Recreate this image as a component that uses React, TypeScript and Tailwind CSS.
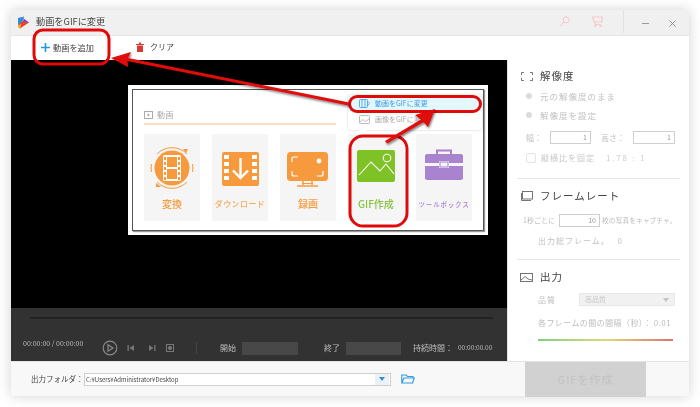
import React from "react";

const Logo = () => (
  <svg width="13" height="13" viewBox="0 0 13 13">
    <path d="M1 2 L7 0.5 L5 7 L1 9Z" fill="#2d8fe0" />
    <path d="M1 9 L7 4 L12 6.5 L3 12.5Z" fill="#e8442c" />
    <path d="M1 9 L4 8 L3.5 12.5 L1.5 12Z" fill="#f5a623" />
    <path d="M6 2 L12 6.5 L7 6Z" fill="#7a4bc9" />
  </svg>
);

const FilmIcon = () => (
  <svg width="44" height="46" viewBox="0 0 44 46">
    <circle cx="22" cy="23" r="17.5" fill="#f79a3e" />
    <path d="M7 9 A21 21 0 0 1 37 9" fill="none" stroke="#f79a3e" strokeWidth="1" />
    <path d="M37 37 A21 21 0 0 1 7 37" fill="none" stroke="#f79a3e" strokeWidth="1" />
    <path d="M1.5 27 A21 21 0 0 1 1.5 19 M42.5 19 A21 21 0 0 1 42.5 27" fill="none" stroke="#f79a3e" strokeWidth="1" />
    <path d="M33 4 L38 4 L36 8Z M6 38 L11 42 L6 42Z" fill="#f79a3e" />
    <rect x="13" y="10" width="18" height="26" rx="1.5" fill="#fff" />
    <rect x="17" y="12" width="10" height="10" fill="#f79a3e" />
    <rect x="17" y="24" width="10" height="10" fill="#f79a3e" />
    <g fill="#f79a3e">
      <rect x="14" y="12" width="2" height="3" />
      <rect x="14" y="17" width="2" height="3" />
      <rect x="14" y="22" width="2" height="3" />
      <rect x="14" y="27" width="2" height="3" />
      <rect x="14" y="32" width="2" height="3" />
      <rect x="28" y="12" width="2" height="3" />
      <rect x="28" y="17" width="2" height="3" />
      <rect x="28" y="22" width="2" height="3" />
      <rect x="28" y="27" width="2" height="3" />
      <rect x="28" y="32" width="2" height="3" />
    </g>
  </svg>
);

const DownloadIcon = () => (
  <svg width="37" height="34" viewBox="0 0 37 34">
    <rect x="0" y="0" width="37" height="34" rx="2" fill="#f79a3e" />
    <g fill="#fff">
      <rect x="2" y="3" width="5" height="4" />
      <rect x="2" y="10" width="5" height="4" />
      <rect x="2" y="17" width="5" height="4" />
      <rect x="2" y="24" width="5" height="4" />
      <rect x="30" y="3" width="5" height="4" />
      <rect x="30" y="10" width="5" height="4" />
      <rect x="30" y="17" width="5" height="4" />
      <rect x="30" y="24" width="5" height="4" />
    </g>
    <path d="M18.5 6 V26 M11 18.5 L18.5 26 L26 18.5" fill="none" stroke="#fff" strokeWidth="2.4" />
  </svg>
);

const ScreenIcon = () => (
  <svg width="42" height="35" viewBox="0 0 42 35">
    <rect x="0" y="0" width="41" height="29" rx="3.5" fill="#f79a3e" />
    <path d="M5 10 V7 Q5 5 7 5 H11 M5 19 V22 Q5 24 7 24 H11 M36 19 V22 Q36 24 34 24 H30" fill="none" stroke="#fff" strokeWidth="1.2" />
    <circle cx="32" cy="9" r="2.4" fill="#fff" />
    <path d="M16 29 V33 M25 29 V33 M10 34 H31" stroke="#f79a3e" strokeWidth="1.4" fill="none" />
    <path d="M15 31.5 H26" stroke="#f79a3e" strokeWidth="1" />
  </svg>
);

const PictureIcon = () => (
  <svg width="38" height="32" viewBox="0 0 38 32">
    <rect width="38" height="32" rx="2" fill="#7ec226" />
    <path d="M2 25 L14 12 L23 21 L29 14 L37 24" fill="none" stroke="#fff" strokeWidth="1.1" />
    <circle cx="30" cy="8" r="3.8" fill="#7ec226" stroke="#fff" strokeWidth="1.1" />
  </svg>
);

const BoxIcon = () => (
  <svg width="38" height="32" viewBox="0 0 38 32">
    <path d="M2 5 H36 Q38 5 38 7 V14 H24 V12 H14 V14 H0 V7 Q0 5 2 5Z" fill="#a982d0" />
    <path d="M0 17 H14 V19 H24 V17 H38 V29 Q38 31 36 31 H2 Q0 31 0 29Z" fill="#a982d0" />
    <path d="M12 5 V1.5 H26 V5" fill="none" stroke="#a982d0" strokeWidth="2" />
    <rect x="15" y="13" width="8" height="5" fill="none" stroke="#a982d0" strokeWidth="1" />
  </svg>
);

const Tile = ({ icon, label, cls, top }: { icon: React.ReactNode; label: string; cls: string; top: string }) => (
  <div className="w-[56px] h-[87px] bg-[#f5f5f5] flex flex-col items-center">
    <div className={`${top} h-[56px] flex items-start justify-center`}>{icon}</div>
    <div className={`mt-auto mb-[10px] leading-[14px] whitespace-nowrap font-medium ${cls}`}>{label}</div>
  </div>
);

const PanelTitle = ({ icon, label }: { icon: React.ReactNode; label: string }) => (
  <div className="flex items-center gap-[7px] pl-[12px] h-[14px] text-[10.5px] tracking-[1px] text-[#444]">
    <span className="w-[13px] flex justify-center">{icon}</span>
    <span>{label}</span>
  </div>
);

const Divider = () => <div className="ml-[9px] w-[163px] h-px bg-[#e6e6e6]" />;

const Radio = ({ label }: { label: string }) => (
  <div className="flex items-center h-[14px] pl-[18px] gap-[8px] text-[8.5px] tracking-[1px] text-[#c2c2c2]">
    <span className="w-[6px] h-[6px] rounded-full bg-[#dcdcdc]" />
    <span>{label}</span>
  </div>
);

const NumBox = ({ w, v }: { w: string; v: string }) => (
  <div className={`${w} h-[13px] border border-[#cfcfcf] bg-white text-[7px] text-[#999] text-right pr-[3px] leading-[11px]`}>{v}</div>
);

export default function App() {
  return (
    <div className="relative w-[700px] h-[407px] overflow-hidden bg-white pt-[10px] pl-[11px] font-['Noto_Sans_CJK_JP',sans-serif] blur-[0.35px]">
      <div className="w-[678px] h-[386px] flex flex-col shadow-[0_0_12px_rgba(0,0,0,0.18)]">
        {/* title bar */}
        <div className="h-[26px] bg-[#f0f0f0] flex items-center pl-[6px] border-b border-[#e6e6e6]">
          <Logo />
          <span className="ml-[6px] mb-[2px] text-[9.2px] text-[#444]">動画をGIFに変更</span>
          <div className="ml-auto flex items-center h-full">
            <svg width="11" height="11" viewBox="0 0 11 11" className="mr-[22px] mb-[2px]" fill="none" stroke="#f5caca" strokeWidth="1">
              <circle cx="7.2" cy="3.8" r="3" />
              <path d="M5 6 L1 10 M2.5 8.5 L4 10" />
            </svg>
            <svg width="11" height="11" viewBox="0 0 11 11" className="mr-[20px] mb-[2px]" fill="none" stroke="#f5caca" strokeWidth="1.2">
              <path d="M0.5 1 H10.5 L9.5 6 H2 Z M3 6 V8.5 H9" />
              <circle cx="3.5" cy="10" r="0.6" />
              <circle cx="8.5" cy="10" r="0.6" />
            </svg>
            <div className="w-px h-[23px] self-start bg-[#e2e2e2] mr-[18px]" />
            <div className="w-[7px] h-px bg-[#999] mr-[20px] mt-[2px]" />
            <svg width="7" height="7" viewBox="0 0 7 7" className="mr-[13px] mt-[2px]" stroke="#888" strokeWidth="0.9">
              <path d="M0.5 0.5 L6.5 6.5 M6.5 0.5 L0.5 6.5" />
            </svg>
          </div>
        </div>
        {/* toolbar */}
        <div className="h-[24px] bg-white flex items-center pl-[30px] pb-[2px] text-[8.2px] text-[#444]">
          <svg width="9" height="9" viewBox="0 0 9 9" stroke="#1f9bdf" strokeWidth="1.6">
            <path d="M4.5 0 V9 M0 4.5 H9" />
          </svg>
          <span className="ml-[3px] w-[41px] whitespace-nowrap">動画を追加</span>
          <svg width="8" height="10" viewBox="0 0 8 10" fill="#d63a30" className="ml-[42px]">
            <path d="M0 2 H8 V3 H0Z M3 0.5 H5 V2 H3Z M1 3.5 H7 V10 H1Z" />
          </svg>
          <span className="ml-[6px] text-[8px]">クリア</span>
        </div>
        {/* main */}
        <div className="flex h-[301px] min-h-0">
          <div className="w-[496px] flex flex-col">
            <div className="h-[248px] bg-black" />
            <div className="h-[53px] bg-[#323232] flex flex-col pl-[12px] pr-[14px] text-[#bdbdbd]">
              <div className="mt-[9px] ml-[7px] h-[2px] bg-[#222]" />
              <div className="mt-[22px] flex items-center h-[14px]">
                <span className="w-[79px] self-start leading-[5px] text-[7px] whitespace-nowrap">00:00:00 / 00:00:00</span>
                <svg width="16" height="16" viewBox="0 0 16 16" fill="none" stroke="#8a8a8a" strokeWidth="1.2" className="mr-[9px]">
                  <circle cx="8" cy="8" r="6.8" />
                  <path d="M6 4.8 L11 8 L6 11.2Z" />
                </svg>
                <svg width="8" height="8" viewBox="0 0 8 8" fill="#777" className="mr-[13px]">
                  <path d="M0.5 1 H1.8 V7 H0.5Z M7 1 V7 L2.5 4Z" />
                </svg>
                <svg width="8" height="8" viewBox="0 0 8 8" fill="#777" className="mr-[10px]">
                  <path d="M1 1 V7 L5.5 4Z M6.2 1 H7.5 V7 H6.2Z" />
                </svg>
                <svg width="8" height="8" viewBox="0 0 8 8" fill="none" stroke="#777" className="mr-[22px]">
                  <rect x="0.5" y="0.5" width="7" height="7" />
                  <circle cx="4" cy="4" r="1.6" fill="#777" />
                </svg>
                <div className="w-px h-[12px] bg-[#444] mr-[23px]" />
                <span className="w-[22px] text-[8px] whitespace-nowrap">開始</span>
                <div className="w-[56px] h-[13px] bg-[#484848]" />
                <span className="ml-[26px] w-[22px] text-[8px] whitespace-nowrap">終了</span>
                <div className="w-[55px] h-[13px] bg-[#484848]" />
                <span className="ml-[12px] w-[45px] text-[8px] whitespace-nowrap">持続時間：</span>
                <span className="text-[6.5px] whitespace-nowrap">00:00:00.00</span>
              </div>
            </div>
          </div>
          {/* right panel */}
          <div className="w-[182px] bg-white border-l border-[#e2e2e2] flex flex-col">
            <div className="mt-[9px]">
              <PanelTitle
                label="解像度"
                icon={
                  <svg width="12" height="9" viewBox="0 0 12 9" fill="none" stroke="#666" strokeWidth="0.9">
                    <path d="M3 0.5 H0.5 V3 M9 0.5 H11.5 V3 M0.5 6 V8.5 H3 M11.5 6 V8.5 H9" />
                  </svg>
                }
              />
            </div>
            <div className="mt-[6px]"><Radio label="元の解像度のまま" /></div>
            <div className="mt-[5px]"><Radio label="解像度を設定" /></div>
            <div className="mt-[9px] flex items-center pl-[18px] h-[13px] text-[8px] text-[#c2c2c2]">
              <span className="w-[24px]">幅：</span>
              <NumBox w="w-[41px]" v="1" />
              <span className="ml-[10px] w-[32px] whitespace-nowrap">高さ：</span>
              <NumBox w="w-[42px]" v="1" />
            </div>
            <div className="mt-[8px] flex items-center pl-[18px] h-[12px] text-[8px] tracking-[1px] text-[#c8c8c8]">
              <span className="w-[10px] h-[10px] border border-[#e4e4e4] rounded-[2px]" />
              <span className="ml-[5px]">縦横比を固定</span>
              <span className="ml-[11px] tracking-[1.8px] text-[#cfcfcf]">1.78 : 1</span>
            </div>
            <div className="mt-[14px]"><Divider /></div>
            <div className="mt-[10px]">
              <PanelTitle
                label="フレームレート"
                icon={
                  <svg width="12" height="10" viewBox="0 0 12 10" fill="none" stroke="#666" strokeWidth="0.9">
                    <rect x="1.5" y="0.5" width="10" height="7.5" />
                    <path d="M0.5 2 V9.5 H10" />
                  </svg>
                }
              />
            </div>
            <div className="mt-[11px] flex items-center pl-[15px] h-[12px] text-[7px] text-[#bdbdbd] whitespace-nowrap">
              <span className="w-[36px]">1秒ごとに</span>
              <NumBox w="w-[41px]" v="10" />
              <span className="ml-[2px] text-[6.8px]">枚の写真をキャプチャ。</span>
            </div>
            <div className="mt-[9px] h-[12px] pl-[30px] text-[8px] tracking-[1px] text-[#c2c2c2] whitespace-nowrap">
              出力総フレーム。 <span className="ml-[5px]">0</span>
            </div>
            <div className="mt-[12px]"><Divider /></div>
            <div className="mt-[10px]">
              <PanelTitle
                label="出力"
                icon={
                  <svg width="13" height="9" viewBox="0 0 13 9" fill="none" stroke="#666" strokeWidth="0.9">
                    <rect x="0.5" y="0.5" width="12" height="8" />
                    <path d="M1 7 L5 3.5 L8 6 L12 7" />
                  </svg>
                }
              />
            </div>
            <div className="mt-[9px] flex items-center pl-[30px] h-[13px] text-[8px] tracking-[1px] text-[#bdbdbd]">
              <span className="w-[41px]">品質</span>
              <div className="w-[96px] h-[13px] bg-[#f1f1f1] border border-[#e8e8e8] flex items-center px-[5px] text-[7px] tracking-normal text-[#c8c8c8]">
                高品質
                <span className="ml-auto w-0 h-0 border-x-[3px] border-x-transparent border-t-[4px] border-t-[#c4c4c4]" />
              </div>
            </div>
            <div className="mt-[11px] h-[12px] pl-[30px] text-[8px] tracking-[0.42px] text-[#bdbdbd] whitespace-nowrap">
              各フレームの間の間隔（秒）： 0.01
            </div>
            <div className="mt-[10px] ml-[30px] w-[135px] h-[2px] bg-gradient-to-r from-[#7fcf7f] via-[#dcd87a] to-[#d9736b]" />
          </div>
        </div>
        {/* bottom */}
        <div className="h-[35px] bg-[#f8f8f8] border-t border-[#e4e4e4] flex items-center pl-[20px] text-[7.5px] text-[#444]">
          <span className="w-[53px] whitespace-nowrap">出力フォルダ：</span>
          <div className="w-[307px] h-[13px] bg-white border border-[#cfcfcf] flex items-center text-[6px] text-[#444] pl-px">
            C:¥Users¥Administrator¥Desktop
            <span className="ml-auto mr-[1px] h-[11px] w-[14px] bg-[#eef1f4] flex items-center justify-center">
              <span className="w-0 h-0 border-x-[3px] border-x-transparent border-t-[4px] border-t-[#2f8fd8]" />
            </span>
          </div>
          <svg width="14" height="10" viewBox="0 0 14 10" fill="none" stroke="#2f9be0" strokeWidth="1.1" className="ml-[10px]">
            <path d="M0.8 9 V1 H5 L6.5 2.5 H12 V4 M0.8 9 L3 4 H13.3 L11.5 9Z" />
          </svg>
          <div className="ml-[110px] w-[121px] h-[35px] bg-[#d1d1d1] flex items-center justify-center text-[11px] tracking-[1px] text-[#c2c2c2]">
            GIFを作成
          </div>
        </div>
      </div>

      {/* inset screenshot */}
      <div className="absolute left-[128px] top-[85px] w-[360px] h-[150px] bg-white p-[4px]">
        <div className="h-full border border-[#555] flex flex-col pl-[11px] shadow-[1px_1px_1px_rgba(0,0,0,0.4)]">
          <div className="mt-[19px] flex items-center gap-[4px] h-[12px] text-[8px] text-[#aaa]">
            <svg width="9" height="8" viewBox="0 0 9 8">
              <rect x="0.5" y="0.5" width="8" height="7" fill="none" stroke="#aaa" />
              <path d="M3.5 2.2 L6 4 L3.5 5.8Z" fill="#aaa" />
            </svg>
            <span className="tracking-[0.5px]">動画</span>
          </div>
          <div className="mt-[2px] w-[192px] h-[2px] bg-[#f9dcc4]" />
          <div className="mt-[9px] flex gap-[12px]">
            <Tile icon={<FilmIcon />} label="変換" cls="text-[10px] text-[#f79a3e]" top="pt-[11px]" />
            <Tile icon={<DownloadIcon />} label="ダウンロード" cls="text-[8px] text-[#f7a85a] tracking-[0.4px]" top="pt-[18px]" />
            <Tile icon={<ScreenIcon />} label="録画" cls="text-[10px] text-[#f79a3e]" top="pt-[18px]" />
            <Tile icon={<PictureIcon />} label="GIF作成" cls="text-[10px] text-[#86c440]" top="pt-[16px]" />
            <Tile icon={<BoxIcon />} label="ツールボックス" cls="text-[6.5px] text-[#a982d0] tracking-[0.8px]" top="pt-[15px]" />
          </div>
        </div>
      </div>

      {/* popup menu */}
      <div className="absolute left-[348px] top-[95px] w-[134px] h-[35px] bg-white rounded-[2px] shadow-[0_0_2px_rgba(0,0,0,0.25)] text-[7px] pt-[1px]">
        <div className="h-[15px] bg-[#e3f7ff] flex items-center pl-[11px] gap-[5px] text-[#3e9be0]">
          <svg width="11" height="9" viewBox="0 0 11 9" fill="none" stroke="#3e9be0" strokeWidth="0.8">
            <rect x="0.5" y="0.5" width="8" height="8" rx="1" />
            <path d="M3 0.5 V8.5 M6 0.5 V8.5 M9 2.5 L10.5 4.5 L9 6.5" />
          </svg>
          <span className="whitespace-nowrap">動画をGIFに変更</span>
        </div>
        <div className="h-[17px] flex items-center pl-[11px] gap-[5px] text-[#a8a8a8]">
          <svg width="11" height="9" viewBox="0 0 11 9" fill="none" stroke="#aaa" strokeWidth="0.8">
            <rect x="0.5" y="0.5" width="10" height="8" rx="1" />
            <path d="M1 7 L4 4.5 L6.5 6.5 L10 4" />
          </svg>
          <span className="whitespace-nowrap">画像をGIFに変更</span>
        </div>
        <div className="absolute left-[11px] top-[35px] w-0 h-0 border-x-[4px] border-x-transparent border-t-[4px] border-t-white" />
      </div>

      {/* red annotations */}
      <svg className="absolute left-0 top-0 pointer-events-none" width="700" height="407" viewBox="0 0 700 407">
        <defs>
          <filter id="sh" x="-10%" y="-30%" width="120%" height="160%">
            <feDropShadow dx="1" dy="1.5" stdDeviation="1.2" floodColor="#000" floodOpacity="0.55" />
          </filter>
        </defs>
        <rect x="34" y="30" width="75" height="34" rx="9" fill="none" stroke="#e00a0a" strokeWidth="3" />
        <rect x="349.5" y="96.5" width="131" height="15" rx="7.5" fill="none" stroke="#e00a0a" strokeWidth="3" />
        <rect x="350" y="136" width="57" height="90" rx="13" fill="none" stroke="#e00a0a" strokeWidth="3" />
        <g filter="url(#sh)" fill="#e00a0a">
          <path d="M349 102.5 L128 58 L131 52 L111 58 L128 67 L127.5 61 L348.5 105.5Z" />
          <path d="M385 141 L421 119.5 L415 115 L435 109 L428 127 L423.5 122 L387 143.5Z" />
        </g>
      </svg>
    </div>
  );
}
